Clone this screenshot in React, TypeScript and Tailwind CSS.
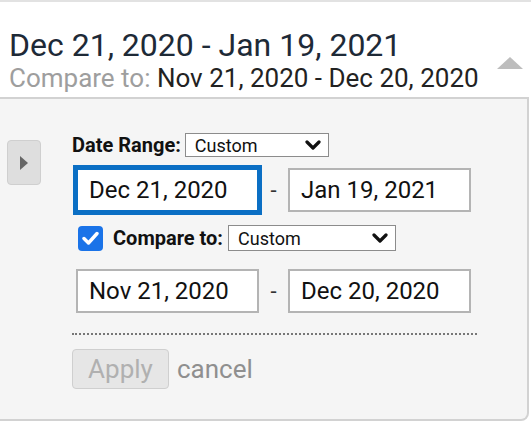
import React from 'react'

function Chevron() {
  return (
    <svg width="16" height="10" viewBox="0 0 16 10" className="shrink-0">
      <path d="M2 2 L8 8 L14 2" fill="none" stroke="#111" strokeWidth="3.2" strokeLinecap="round" strokeLinejoin="round" />
    </svg>
  )
}

function Select({ width }: { width: string }) {
  return (
    <div className={`${width} h-full flex items-center justify-between bg-white border border-[#8c8c8c] pl-[9px] pr-[7px] text-[18px] text-[#111]`}>
      <span>Custom</span>
      <Chevron />
    </div>
  )
}

function DateInput({ value, focused }: { value: string; focused?: boolean }) {
  return (
    <div
      className={`w-[183px] h-[44px] flex items-center bg-white pl-[11px] text-[24px] text-[#111] border-2 ${
        focused
          ? 'border-[#0b6fc4] outline-[3px] outline-solid outline-[#0b6fc4]'
          : 'border-[#b4b4b4]'
      }`}
    >
      {value}
    </div>
  )
}

function DateRow({ from, to, focused }: { from: string; to: string; focused?: boolean }) {
  return (
    <div className="flex items-center h-[44px] ml-[4px]">
      <DateInput value={from} focused={focused} />
      <span className="w-[29px] text-center text-[22px] text-[#333]">-</span>
      <DateInput value={to} />
    </div>
  )
}

export default function App() {
  return (
    <div className="w-[531px] h-[423px] bg-white overflow-hidden font-[Roboto,sans-serif] border-t-2 border-[#e2e2e2]">
      <div className="flex items-start justify-between pl-[9px] pr-[8px] pt-[25px]">
        <div>
          <div className="text-[32px] leading-[36px] text-[#1e2a37]">Dec 21, 2020 - Jan 19, 2021</div>
          <div className="text-[26px] leading-[30px]">
            <span className="text-[#9e9e9e]">Compare to: </span>
            <span className="text-[#222]">Nov 21, 2020 - Dec 20, 2020</span>
          </div>
        </div>
        <svg width="26" height="12" viewBox="0 0 26 12" className="mt-[30px]">
          <path d="M13 0 L26 12 L0 12 Z" fill="#bdbdbd" />
        </svg>
      </div>

      <div className="mt-[4px] w-[529px] h-[324px] bg-[#f5f5f5] border-t-2 border-r-2 border-b-2 border-[#d2d2d2] rounded-br-[8px] flex">
        <div className="pl-[7px] pt-[41px]">
          <div className="w-[34px] h-[45px] rounded-[4px] bg-[#dedede] border border-[#cfcfcf] flex items-center justify-center">
            <svg width="8" height="14" viewBox="0 0 8 14">
              <path d="M0 0 L8 7 L0 14 Z" fill="#666" />
            </svg>
          </div>
        </div>

        <div className="ml-[31px] pt-[34px] flex flex-col">
          <div className="flex items-center h-[24px]">
            <span className="text-[20px] font-bold text-[#111] mr-[4px]">Date Range:</span>
            <Select width="w-[144px]" />
          </div>

          <div className="mt-[11px]">
            <DateRow from="Dec 21, 2020" to="Jan 19, 2021" focused />
          </div>

          <div className="mt-[13px] flex items-center h-[26px]">
            <div className="ml-[6px] w-[25px] h-[25px] rounded-[4px] bg-[#1a73e8] flex items-center justify-center">
              <svg width="17" height="14" viewBox="0 0 17 14">
                <path d="M2 7.5 L6.5 12 L15 2.5" fill="none" stroke="#fff" strokeWidth="3.4" strokeLinecap="round" strokeLinejoin="round" />
              </svg>
            </div>
            <span className="ml-[10px] text-[20px] font-bold text-[#111] mr-[5px]">Compare to:</span>
            <Select width="w-[168px]" />
          </div>

          <div className="mt-[18px]">
            <DateRow from="Nov 21, 2020" to="Dec 20, 2020" />
          </div>

          <div className="mt-[20px] w-[405px] border-t-2 border-dotted border-[#777]" />

          <div className="mt-[14px] flex items-center">
            <div className="w-[97px] h-[40px] rounded-[4px] bg-[#e6e6e6] border border-[#cfcfcf] flex items-center justify-center text-[26px] text-[#b0b0b0]">
              Apply
            </div>
            <span className="ml-[8px] text-[26px] text-[#8f8f8f]">cancel</span>
          </div>
        </div>
      </div>
    </div>
  )
}
